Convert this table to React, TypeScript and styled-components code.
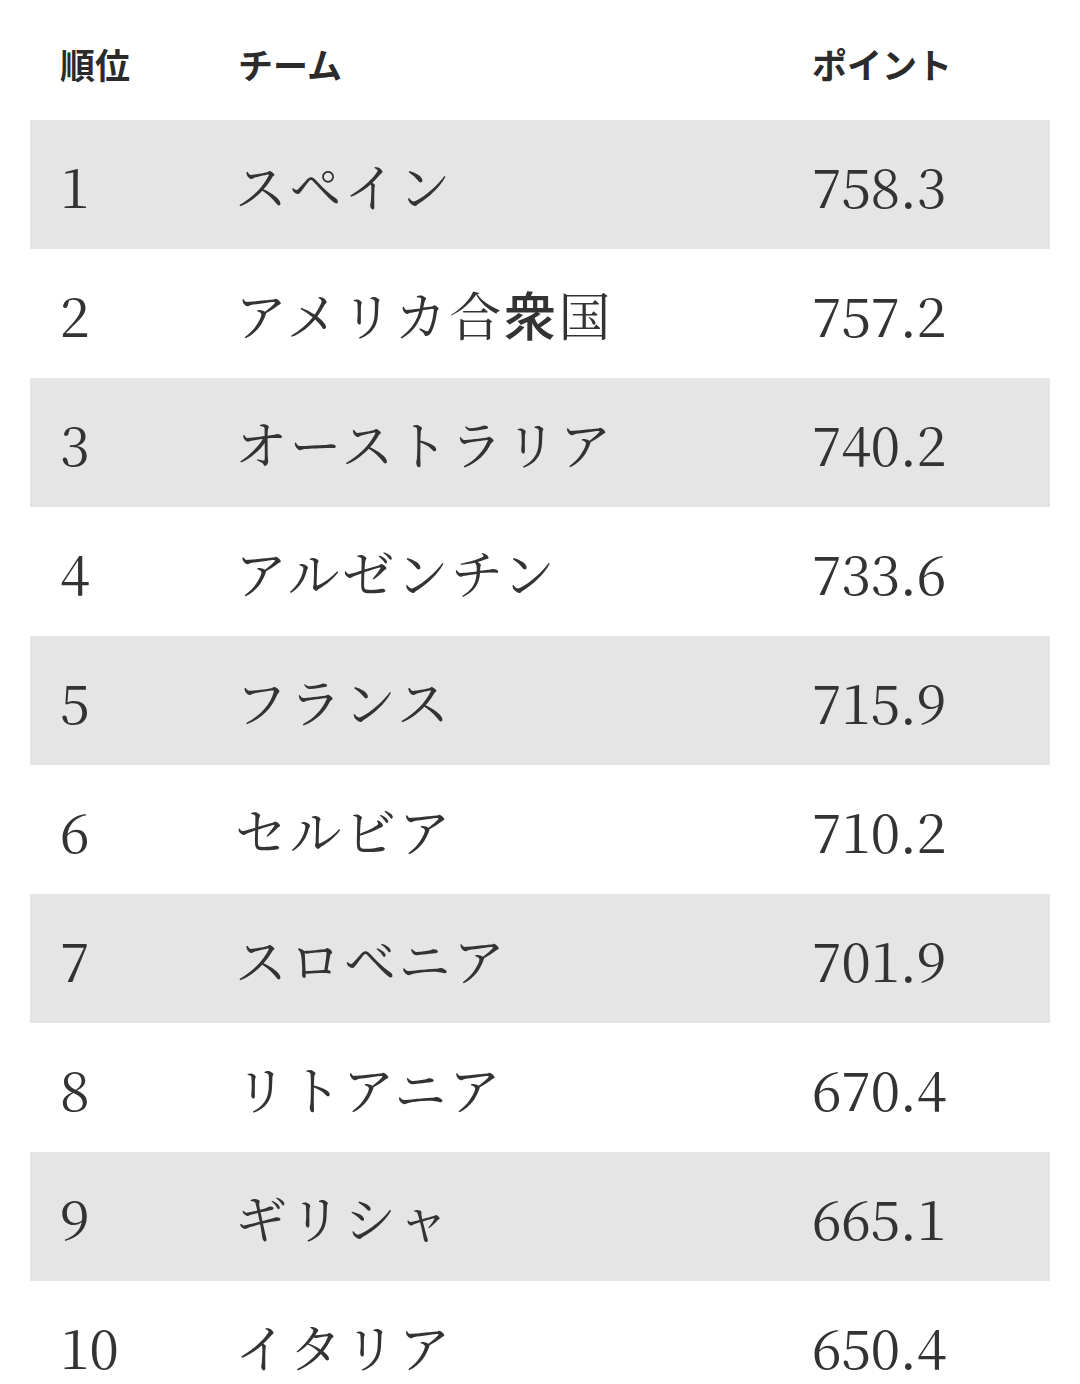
import React from "react";
import styled, { createGlobalStyle } from "styled-components";

const GlobalStyle = createGlobalStyle`
  html, body {
    margin: 0;
    padding: 0;
    background: #ffffff;
  }
  body {
    font-family: "Noto Sans CJK JP", "Noto Sans", sans-serif;
    color: #333333;
  }
`;

const Table = styled.div`
  margin: 0 30px;
  width: 1020px;
  display: flex;
  flex-direction: column;
`;

const Row = styled.div<{ $shaded?: boolean; $head?: boolean }>`
  display: grid;
  grid-template-columns: 178px 574px 1fr;
  align-items: center;
  padding-left: 30px;
  height: ${(p) => (p.$head ? "120px" : "129px")};
  background: ${(p) => (p.$shaded ? "#e5e5e5" : "transparent")};
`;

const HeadCell = styled.div`
  font-family: "Noto Sans CJK JP", "Noto Sans", sans-serif;
  font-weight: 700;
  font-size: 35px;
  color: #2b2b2b;
  margin-top: 6px;
`;

const NumCell = styled.div`
  font-family: "Noto Serif CJK JP", "Liberation Serif", serif;
  font-size: 54px;
  color: #333333;
  letter-spacing: -0.5px;
`;

const TeamCell = styled.div`
  font-family: "Noto Serif CJK JP", "Noto Sans CJK JP", serif;
  font-size: 52px;
  font-weight: 400;
  color: #333333;
  letter-spacing: 2.5px;
  margin-left: -3px;
`;

const SansGlyph = styled.span`
  font-family: "Noto Sans CJK JP", sans-serif;
  font-weight: 500;
`;

const rows: [number, React.ReactNode, string][] = [
  [1, "スペイン", "758.3"],
  [2, <>アメリカ合<SansGlyph>衆</SansGlyph>国</>, "757.2"],
  [3, "オーストラリア", "740.2"],
  [4, "アルゼンチン", "733.6"],
  [5, "フランス", "715.9"],
  [6, "セルビア", "710.2"],
  [7, "スロベニア", "701.9"],
  [8, "リトアニア", "670.4"],
  [9, "ギリシャ", "665.1"],
  [10, "イタリア", "650.4"],
];

const App = () => (
  <>
    <GlobalStyle />
    <Table>
      <Row $head>
        <HeadCell>順位</HeadCell>
        <HeadCell>チーム</HeadCell>
        <HeadCell>ポイント</HeadCell>
      </Row>
      {rows.map(([rank, team, pts]) => (
        <Row key={rank} $shaded={rank % 2 === 1}>
          <NumCell>{rank}</NumCell>
          <TeamCell>{team}</TeamCell>
          <NumCell>{pts}</NumCell>
        </Row>
      ))}
    </Table>
  </>
);

export default App;
